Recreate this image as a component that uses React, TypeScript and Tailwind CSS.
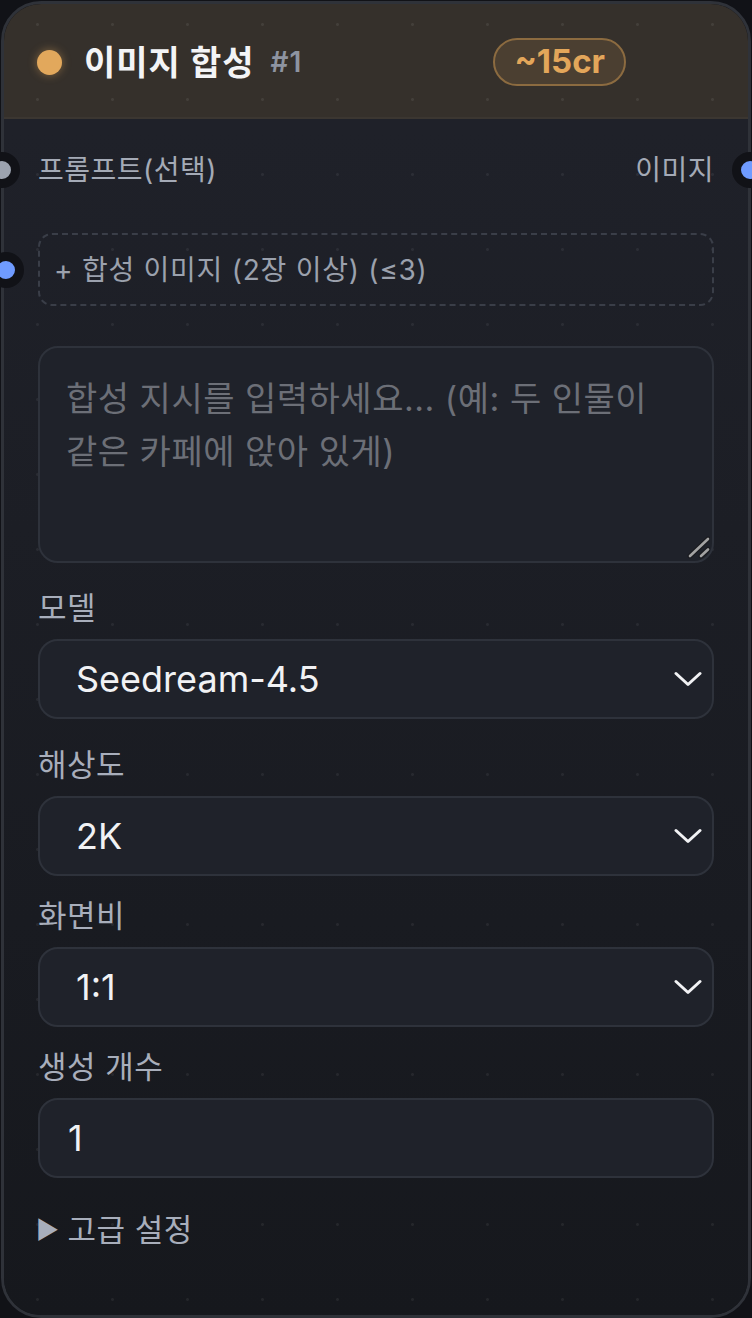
import React from 'react';

const FONT = "font-['Inter','Noto_Sans_CJK_KR',sans-serif]";

const FIELD =
  'rounded-[20px] border-2 border-[#2e323b] bg-[#1f222a] text-[#f1f2f4]';

function Handle({ color, className }: { color: string; className: string }) {
  return (
    <span
      className={`absolute top-1/2 h-[36px] w-[36px] -translate-y-1/2 rounded-full border-[9px] border-[#111217] ${color} ${className}`}
    />
  );
}

function Label({ children, className = '' }: { children: React.ReactNode; className?: string }) {
  return (
    <div className={`text-[31px] leading-[36px] tracking-[0.5px] text-[#a8aebb] ${className}`}>
      {children}
    </div>
  );
}

function SelectBox({ value }: { value: string }) {
  return (
    <div className={`mt-[13px] flex h-[80px] items-center justify-between pl-[36px] pr-[10px] ${FIELD}`}>
      <span className="text-[36px] leading-none">{value}</span>
      <svg width="28" height="16" viewBox="0 0 28 16" fill="none">
        <path
          d="M2 2.5 14 13.5 26 2.5"
          stroke="#f1f2f4"
          strokeWidth="3"
          strokeLinecap="round"
          strokeLinejoin="round"
        />
      </svg>
    </div>
  );
}

export default function App() {
  return (
    <div className={`min-h-screen bg-[#111217] p-px ${FONT}`}>
      <div className="flex flex-col rounded-[40px] border-[3px] border-[#2f3239]">
        {/* header */}
        <div className="flex h-[115px] items-center rounded-t-[37px] border-b-2 border-[#3b3631] bg-[#35302b] pl-[33px] pr-[122px] pt-[3px] [background-image:radial-gradient(circle,rgba(255,255,255,0.07)_1.2px,transparent_1.7px)] [background-size:75px_75px] [background-position:0px_-13px] [background-attachment:fixed]">
          <span className="h-[25px] w-[25px] rounded-full bg-[#e2a85c] shadow-[0_0_10px_rgba(226,168,92,0.45)]" />
          <span className="ml-[22px] text-[34px] font-bold tracking-[1px] text-[#f3f4f6]">이미지 합성</span>
          <span className="ml-[16px] text-[28px] font-semibold tracking-[1px] text-[#8e94a1]">#1</span>
          <span className="ml-auto flex h-[48px] items-center rounded-full border-2 border-[#8c6b40] bg-[#4b3f31] px-[19px] text-[33px] font-bold text-[#e3a65a]">
            ~15cr
          </span>
        </div>

        {/* body */}
        <div className="flex flex-col rounded-b-[37px] px-[34px] pb-[67px] pt-[33px] [background-image:radial-gradient(circle,rgba(255,255,255,0.06)_1.2px,transparent_1.7px),linear-gradient(180deg,#1f2129_0%,#1f2129_10%,#16181d_100%)] [background-size:75px_75px,100%_100%] [background-position:0px_-13px,0px_0px] [background-attachment:fixed]">
          <div className="relative flex justify-between text-[28px] leading-[36px] tracking-[0.5px] text-[#a4aab6]">
            <Handle color="bg-[#9ca3af]" className="left-[-54px]" />
            <span>프롬프트(선택)</span>
            <span>이미지</span>
            <Handle color="bg-[#6f9bff]" className="right-[-54px]" />
          </div>

          <div className="relative mt-[45px] flex h-[73px] items-center rounded-[14px] border-2 border-dashed border-[#3a3e48] pl-[14px] text-[28px] tracking-[0.75px] text-[#9ba1ad]">
            <Handle color="bg-[#6f9bff]" className="left-[-52px]" />
            + 합성 이미지 (2장 이상) (≤3)
          </div>

          <div className="relative mt-[40px] h-[217px]">
            <textarea
              className={`block h-full w-full resize-none px-[26px] pt-[24px] text-[34px] leading-[53px] tracking-[0.5px] outline-none placeholder:text-[#6c6f77] ${FIELD}`}
              placeholder="합성 지시를 입력하세요... (예: 두 인물이 같은 카페에 앉아 있게)"
            />
            <svg
              className="pointer-events-none absolute bottom-[4px] right-[4px]"
              width="24"
              height="24"
              viewBox="0 0 24 24"
            >
              <g stroke="#1a1b1f" strokeWidth="5" strokeLinecap="round">
                <path d="M4 21 22 4" />
                <path d="M15 21 22 14.5" />
              </g>
              <g stroke="#a3a3a3" strokeWidth="2.6" strokeLinecap="round">
                <path d="M4 21 22 4" />
                <path d="M15 21 22 14.5" />
              </g>
            </svg>
          </div>

          <Label className="mt-[27px]">모델</Label>
          <SelectBox value="Seedream-4.5" />

          <Label className="mt-[28px]">해상도</Label>
          <SelectBox value="2K" />

          <Label className="mt-[22px]">화면비</Label>
          <SelectBox value="1:1" />

          <Label className="mt-[22px]">생성 개수</Label>
          <div className={`mt-[13px] flex h-[80px] items-center pl-[28px] text-[36px] ${FIELD}`}>1</div>

          <div className="mt-[34px] flex items-center text-[31px] leading-[36px] tracking-[0.5px] text-[#a8aebb]">
            <span className="ml-[-2px] mr-[8px] text-[25px]">▶</span>
            고급 설정
          </div>
        </div>
      </div>
    </div>
  );
}
